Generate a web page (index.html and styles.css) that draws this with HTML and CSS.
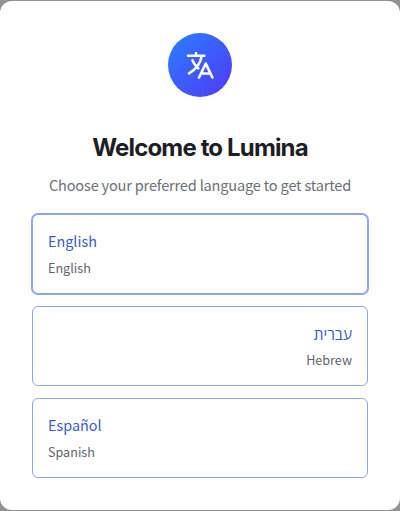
FILE: index.html
```html
<!DOCTYPE html>
<html lang="en">
<head>
<meta charset="utf-8">
<title>Welcome to Lumina</title>
<link rel="stylesheet" href="styles.css">
</head>
<body>
<main class="dialog">
  <div class="badge">
    <svg width="32" height="32" viewBox="0 0 32 32" fill="none" stroke="#fff" stroke-width="2.6" stroke-linecap="round" stroke-linejoin="round">
      <path d="M12 4.2V6.6M4 6.7H20.3M17.7 6.9C16.8 14 11.5 20.5 5 24.4M8.5 11.4C9.8 14.5 12 17.2 14.3 19.2M15 28.5L21.8 14.6L28.4 28.5M17.5 24.5H26.3"/>
    </svg>
  </div>
  <h1 class="title">Welcome to Lumina</h1>
  <p class="subtitle">Choose your preferred language to get started</p>
  <div class="languages">
    <button class="language selected"><span class="native">English</span><span class="name">English</span></button>
    <button class="language rtl"><span class="native hebrew" lang="he">עברית</span><span class="name">Hebrew</span></button>
    <button class="language"><span class="native">Español</span><span class="name">Spanish</span></button>
  </div>
</main>
</body>
</html>
```
FILE: styles.css
```css
* { box-sizing: border-box; }
body {
  margin: 0;
  height: 511px;
  padding: 1px 0;
  overflow: hidden;
  background: #929292;
  font-family: "Noto Sans CJK SC", "Open Sans", sans-serif;
}
.dialog {
  height: 509px;
  padding: 32px;
  border-radius: 12px;
  background: #fff;
  display: flex;
  flex-direction: column;
  align-items: center;
}
.badge {
  width: 64px;
  height: 64px;
  flex: none;
  border-radius: 50%;
  background: linear-gradient(135deg, #2b7fff, #4f39f6);
  display: flex;
  align-items: center;
  justify-content: center;
}
.title {
  margin: 35px 0 0;
  font: 700 24px/32px Inter, sans-serif;
  letter-spacing: -0.85px;
  color: #1c2024;
  white-space: nowrap;
}
.subtitle {
  margin: 9px 0 17px;
  font-size: 14.6px;
  line-height: 24px;
  letter-spacing: -0.2px;
  color: #6b6f77;
  white-space: nowrap;
}
.languages {
  width: 100%;
  display: flex;
  flex-direction: column;
  gap: 12px;
}
.language {
  height: 80px;
  padding: 15px 15px 0;
  border: 1px solid #8da4ef;
  border-radius: 6px;
  background: #fff;
  font-family: inherit;
  text-align: left;
  display: flex;
  flex-direction: column;
  justify-content: flex-start;
}
.selected { box-shadow: 0 0 0 1px #8da4ef; }
.rtl { align-items: flex-end; }
.native {
  height: 28px;
  font-size: 14.4px;
  line-height: 22px;
  color: #3a5bc7;
}
.hebrew { font-size: 15.4px; }
.name {
  font-size: 12.6px;
  line-height: 20px;
  color: #60646c;
}
```
